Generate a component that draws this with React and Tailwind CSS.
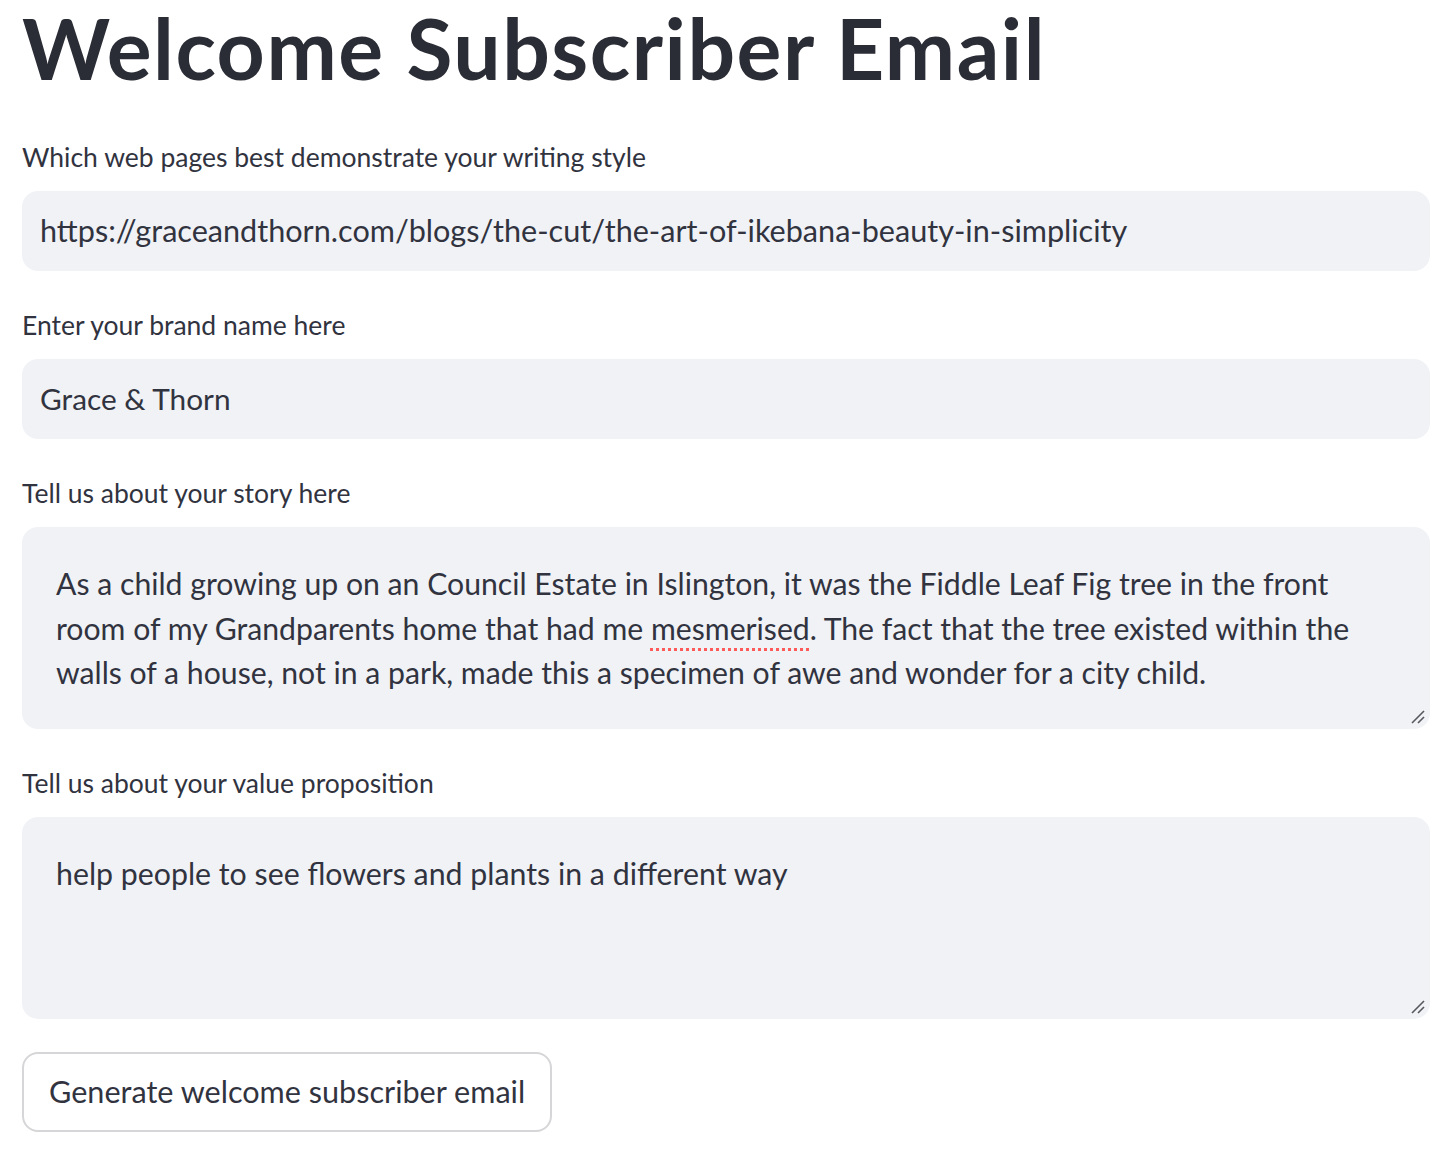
import React from "react";

const FONT = { fontFamily: "Lato, 'Noto Sans', sans-serif" };

function Grip() {
  return (
    <svg
      className="absolute right-[4px] bottom-[4px]"
      width="16"
      height="16"
      viewBox="0 0 16 16"
    >
      <line x1="2" y1="14" x2="14" y2="2" stroke="#55575f" strokeWidth="1.6" />
      <line x1="8" y1="14" x2="14" y2="8" stroke="#55575f" strokeWidth="1.6" />
    </svg>
  );
}

function Label({ children }) {
  return (
    <div className="text-[26.5px] leading-[40px] text-[#31333f] mb-[14px]">
      {children}
    </div>
  );
}

function Input({ value, size }) {
  return (
    <div
      className={`h-[80px] rounded-[16px] bg-[#f0f2f6] flex items-center pl-[18px] text-[#31333f] whitespace-nowrap overflow-hidden ${size}`}
    >
      {value}
    </div>
  );
}

export default function App() {
  return (
    <div className="bg-white min-h-[1160px] w-[1448px]" style={FONT}>
      <div className="w-[1408px] ml-[22px] pt-[2px]">
        <h1 className="text-[84px] leading-[92px] font-bold text-[#2b2d36] tracking-[1.5px]">
          Welcome Subscriber Email
        </h1>

        <div className="mt-[43px]">
          <Label>Which web pages best demonstrate your writing style</Label>
          <Input
            size="text-[30.6px]"
            value="https://graceandthorn.com/blogs/the-cut/the-art-of-ikebana-beauty-in-simplicity"
          />
        </div>

        <div className="mt-[34px]">
          <Label>Enter your brand name here</Label>
          <Input size="text-[29.8px]" value="Grace & Thorn" />
        </div>

        <div className="mt-[34px]">
          <Label>Tell us about your story here</Label>
          <div className="relative h-[202px] rounded-[16px] bg-[#f0f2f6] pt-[34px] pl-[34px] text-[30.2px] leading-[44.5px] text-[#31333f]">
            <div className="whitespace-nowrap">
              As a child growing up on an Council Estate in Islington, it was the Fiddle Leaf Fig tree in the front
            </div>
            <div className="whitespace-nowrap">
              room of my Grandparents home that had me{" "}
              <span className="underline decoration-dotted decoration-[#ff5a5a] decoration-[3px] underline-offset-[8px]">
                mesmerised
              </span>
              . The fact that the tree existed within the
            </div>
            <div className="whitespace-nowrap">
              walls of a house, not in a park, made this a specimen of awe and wonder for a city child.
            </div>
            <Grip />
          </div>
        </div>

        <div className="mt-[34px]">
          <Label>Tell us about your value proposition</Label>
          <div className="relative h-[202px] rounded-[16px] bg-[#f0f2f6] pt-[34px] pl-[34px] text-[30.3px] leading-[44.5px] text-[#31333f]">
            <div className="whitespace-nowrap">
              help people to see flowers and plants in a different way
            </div>
            <Grip />
          </div>
        </div>

        <button className="mt-[33px] h-[80px] px-[25px] rounded-[16px] border-2 border-[#d6d6d9] bg-white text-[30.6px] text-[#31333f]">
          Generate welcome subscriber email
        </button>
      </div>
    </div>
  );
}
